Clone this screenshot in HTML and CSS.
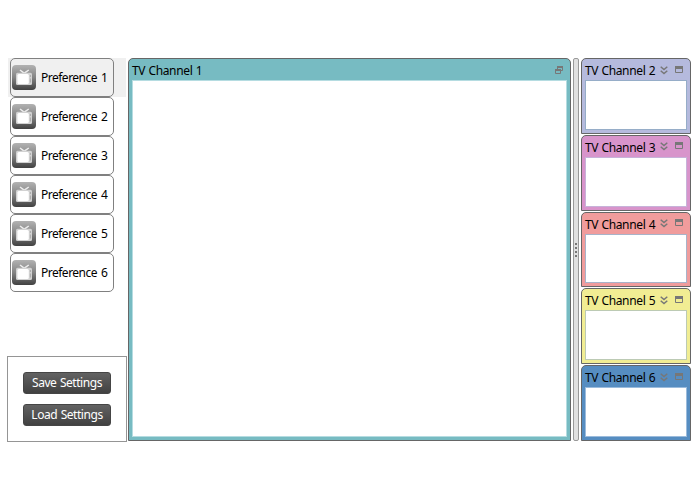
FILE: index.html
```html
<!DOCTYPE html>
<html lang="en">
<head>
<meta charset="utf-8">
<title>TV Channels</title>
<link rel="stylesheet" href="styles.css">
</head>
<body>
<svg width="0" height="0" class="defs">
  <defs>
    <linearGradient id="tile" x1="0" y1="0" x2="0" y2="1"><stop offset="0" stop-color="#b2b2b2"/><stop offset=".5" stop-color="#848484"/><stop offset="1" stop-color="#414141"/></linearGradient>
    <symbol id="tv" viewBox="0 0 24 25">
      <rect width="24" height="25" rx="4" fill="url(#tile)"/>
      <path d="M8 5l4.2 3.2L16.8 5" fill="none" stroke="#ececec" stroke-width="1.5"/>
      <rect x="4" y="7.8" width="16" height="12.2" rx="1.5" fill="#d2d2d2"/>
      <rect x="5.4" y="9" width="11.4" height="10" rx="1.5" fill="#fff"/>
      <path d="M18.4 10v2M18.4 13.5v4" stroke="#aaa" stroke-width="1"/>
    </symbol>
    <symbol id="down" viewBox="0 0 8 9"><path d="M.7.8L4 3.6 7.3.8M.7 4.8L4 7.6l3.3-2.8" fill="none" stroke="#777" stroke-width="1.5"/></symbol>
    <symbol id="max" viewBox="0 0 8 7"><path d="M.5.5h7v6h-7z" fill="none" stroke="#777"/><path d="M0 0h8v3H0z" fill="#777"/></symbol>
    <symbol id="restore" viewBox="0 0 8 8"><path d="M2.5 3V.5h5v4H6M.5 3.5h5v4h-5z" fill="none" stroke="#777"/><path d="M2 0h6v2H2zM0 3h6v2H0z" fill="#777"/></symbol>
  </defs>
</svg>
<main class="app">
  <aside class="sidebar">
    <ul class="prefs">
      <li class="row selected"><div class="pref"><svg><use href="#tv"/></svg><span>Preference 1</span></div></li>
      <li class="row"><div class="pref"><svg><use href="#tv"/></svg><span>Preference 2</span></div></li>
      <li class="row"><div class="pref"><svg><use href="#tv"/></svg><span>Preference 3</span></div></li>
      <li class="row"><div class="pref"><svg><use href="#tv"/></svg><span>Preference 4</span></div></li>
      <li class="row"><div class="pref"><svg><use href="#tv"/></svg><span>Preference 5</span></div></li>
      <li class="row"><div class="pref"><svg><use href="#tv"/></svg><span>Preference 6</span></div></li>
    </ul>
    <div class="settings"><button>Save Settings</button><button>Load Settings</button></div>
  </aside>
  <section class="panel main c1"><header><span class="title">TV Channel 1</span><svg class="restore"><use href="#restore"/></svg></header><div class="screen"></div></section>
  <div class="splitter"><i></i><i></i><i></i><i></i></div>
  <div class="stack">
    <section class="panel c2"><header><span class="title">TV Channel 2</span><svg class="down"><use href="#down"/></svg><svg class="max"><use href="#max"/></svg></header><div class="screen"></div></section>
    <section class="panel c3"><header><span class="title">TV Channel 3</span><svg class="down"><use href="#down"/></svg><svg class="max"><use href="#max"/></svg></header><div class="screen"></div></section>
    <section class="panel c4"><header><span class="title">TV Channel 4</span><svg class="down"><use href="#down"/></svg><svg class="max"><use href="#max"/></svg></header><div class="screen"></div></section>
    <section class="panel c5"><header><span class="title">TV Channel 5</span><svg class="down"><use href="#down"/></svg><svg class="max"><use href="#max"/></svg></header><div class="screen"></div></section>
    <section class="panel c6"><header><span class="title">TV Channel 6</span><svg class="down"><use href="#down"/></svg><svg class="max"><use href="#max"/></svg></header><div class="screen"></div></section>
  </div>
</main>
</body>
</html>
```
FILE: styles.css
```css
* { box-sizing: border-box; }
body { margin: 0; background: #fff; font: 12px/16px "Noto Sans", "Open Sans", sans-serif; color: #000; }
svg { display: block; flex: none; }
.defs { position: absolute; }
.app { display: flex; height: 442px; padding: 58px 9px 0 7px; }
.sidebar { width: 120px; margin-right: 1px; display: flex; flex-direction: column; justify-content: space-between; }
.prefs { list-style: none; margin: 0; padding: 0; }
.row { height: 39px; padding-left: 2px; margin-left: 1px; width: 118px; }
.selected { background: #f0f0f0; }
.pref { width: 104px; height: 39px; border: 1px solid #808080; border-radius: 5px; display: flex; align-items: center; padding-left: 1px; }
.pref svg { width: 24px; height: 25px; }
.pref span { margin-left: 5px; white-space: nowrap; letter-spacing: -.5px; word-spacing: 1.2px; }
.row:not(.selected) .pref { background: #fff; }
.settings { height: 86px; border: 1px solid #959595; display: flex; flex-direction: column; align-items: center; gap: 10px; padding-top: 15px; }
button { width: 88px; height: 22px; padding: 0; border: 1px solid #454545; border-radius: 3px; background: linear-gradient(#626262, #414141); color: #fff; font: inherit; line-height: 20px; letter-spacing: -.45px; word-spacing: .8px; white-space: nowrap; }
.panel { background: var(--c); border: 1px solid #666; border-radius: 5px 5px 0 0; padding: 0 3px 3px; display: flex; flex-direction: column; min-height: 0; }
.main { width: 443px; height: 383px; }
.panel header { height: 21px; flex: none; display: flex; align-items: center; }
.title { flex: 1; white-space: nowrap; letter-spacing: -.35px; word-spacing: .5px; padding-top: 3px; }
.screen { flex: 1; background: #fff; border: 1px solid var(--edge); }
.restore { width: 8px; height: 8px; margin: 1px 4px 0 0; }
.down { width: 8px; height: 9px; margin: 1px 7px 0 0; }
.max { width: 8px; height: 7px; margin: 0 4px 1px 0; }
.splitter { width: 6px; height: 383px; margin: 0 2px; border: 1px solid #999; border-radius: 2px; background: #e1e1e1; display: flex; flex-direction: column; align-items: center; justify-content: center; gap: 2px; }
.splitter i { width: 2px; height: 2px; background: #777; }
.stack { width: 110px; height: 383px; display: grid; grid-template-rows: repeat(5, 1fr); gap: 1px; }
.c1 { --c: #77bbc2; --edge: #b5dce1; }
.c2 { --c: #b5badd; --edge: #96adc8; }
.c3 { --c: #d894cb; --edge: #c7b2d9; }
.c4 { --c: #f09c9c; --edge: #a8b3c9; }
.c5 { --c: #f1ed93; --edge: #bccab4; }
.c6 { --c: #568dc1; --edge: #9bbbdc; }
```
